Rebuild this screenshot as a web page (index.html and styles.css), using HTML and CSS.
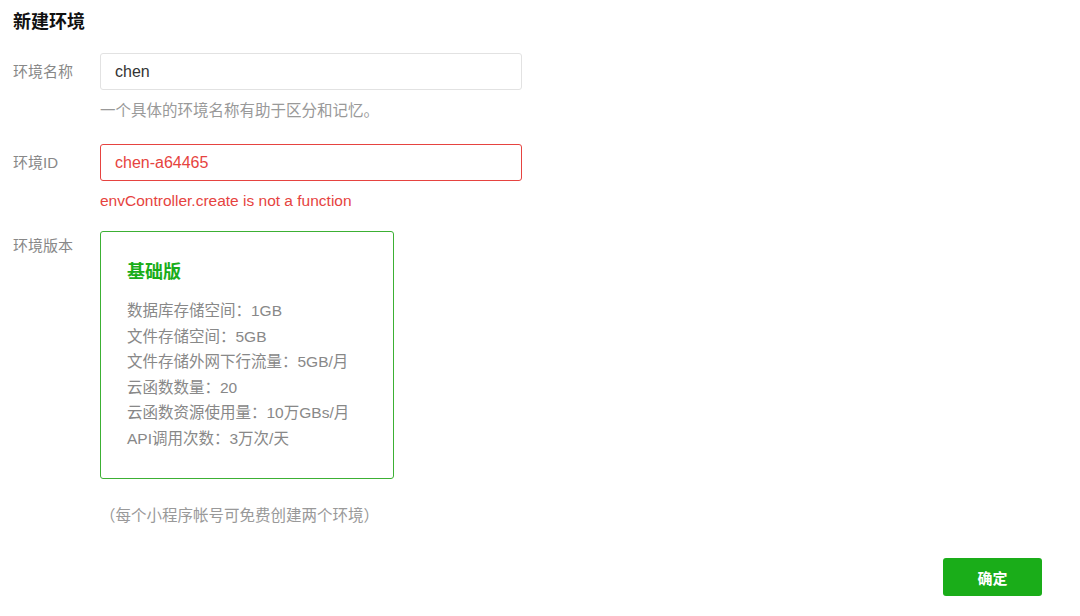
FILE: index.html
```html
<!DOCTYPE html>
<html lang="zh-CN">
<head>
<meta charset="utf-8">
<title>新建环境</title>
<link rel="stylesheet" href="styles.css">
</head>
<body>
<div class="page">
  <h1 class="title">新建环境</h1>

  <div class="row row-name">
    <div class="label">环境名称</div>
    <div class="field">
      <div class="input">chen</div>
      <div class="hint">一个具体的环境名称有助于区分和记忆。</div>
    </div>
  </div>

  <div class="row row-id">
    <div class="label">环境ID</div>
    <div class="field">
      <div class="input input-error">chen-a64465</div>
      <div class="error">envController.create is not a function</div>
    </div>
  </div>

  <div class="row row-version">
    <div class="label label-top">环境版本</div>
    <div class="field">
      <div class="card">
        <div class="card-title">基础版</div>
        <ul class="specs">
          <li>数据库存储空间：1GB</li>
          <li>文件存储空间：5GB</li>
          <li>文件存储外网下行流量：5GB/月</li>
          <li>云函数数量：20</li>
          <li>云函数资源使用量：10万GBs/月</li>
          <li>API调用次数：3万次/天</li>
        </ul>
      </div>
      <div class="note">（每个小程序帐号可免费创建两个环境）</div>
    </div>
  </div>

  <div class="actions">
    <button class="btn-primary">确定</button>
  </div>
</div>
</body>
</html>
```

FILE: styles.css
```css
html, body {
  margin: 0;
  padding: 0;
  background: #ffffff;
}

body {
  font-family: "Liberation Sans", "Noto Sans CJK SC", sans-serif;
  color: #333;
  width: 1080px;
  height: 616px;
  overflow: hidden;
}

.page {
  padding: 11px 13px 0 13px;
}

.title {
  margin: 0;
  font-size: 18px;
  line-height: 22px;
  font-weight: bold;
  color: #111;
}

.row {
  display: flex;
}

.row-name {
  margin-top: 20px;
}

.row-id {
  margin-top: 23px;
}

.row-version {
  margin-top: 20px;
}

.label {
  width: 87px;
  flex: none;
  font-size: 15px;
  line-height: 37px;
  color: #888;
}

.label-top {
  line-height: 30px;
}

.field {
  display: flex;
  flex-direction: column;
  align-items: flex-start;
}

.input {
  box-sizing: border-box;
  width: 422px;
  height: 37px;
  border: 1px solid #e2e2e2;
  border-radius: 3px;
  padding-left: 14px;
  font-size: 16px;
  line-height: 35px;
  color: #333;
}

.input-error {
  border-color: #e64340;
  color: #e64340;
}

.hint {
  margin-top: 11px;
  font-size: 15.5px;
  line-height: 20px;
  color: #999;
}

.error {
  margin-top: 10px;
  font-size: 15.5px;
  line-height: 20px;
  color: #e64340;
}

.card {
  box-sizing: border-box;
  width: 294px;
  height: 248px;
  border: 1px solid #3cb034;
  border-radius: 3px;
  padding: 29px 26px 0 26px;
}

.card-title {
  font-size: 18px;
  line-height: 22px;
  font-weight: bold;
  color: #1aad19;
}

.specs {
  list-style: none;
  margin: 15px 0 0 0;
  padding: 0;
  font-size: 15.5px;
  line-height: 25.6px;
  color: #888;
}

.note {
  margin-top: 27px;
  font-size: 15.5px;
  line-height: 20px;
  color: #999;
}

.actions {
  display: flex;
  justify-content: flex-end;
  padding-right: 25px;
  margin-top: 32px;
}

.btn-primary {
  box-sizing: border-box;
  width: 99px;
  height: 38px;
  border: none;
  border-radius: 3px;
  background: #1aad19;
  color: #fff;
  font-family: "Liberation Sans", "Noto Sans CJK SC", sans-serif;
  font-size: 15px;
  font-weight: bold;
  padding: 0;
}
```
